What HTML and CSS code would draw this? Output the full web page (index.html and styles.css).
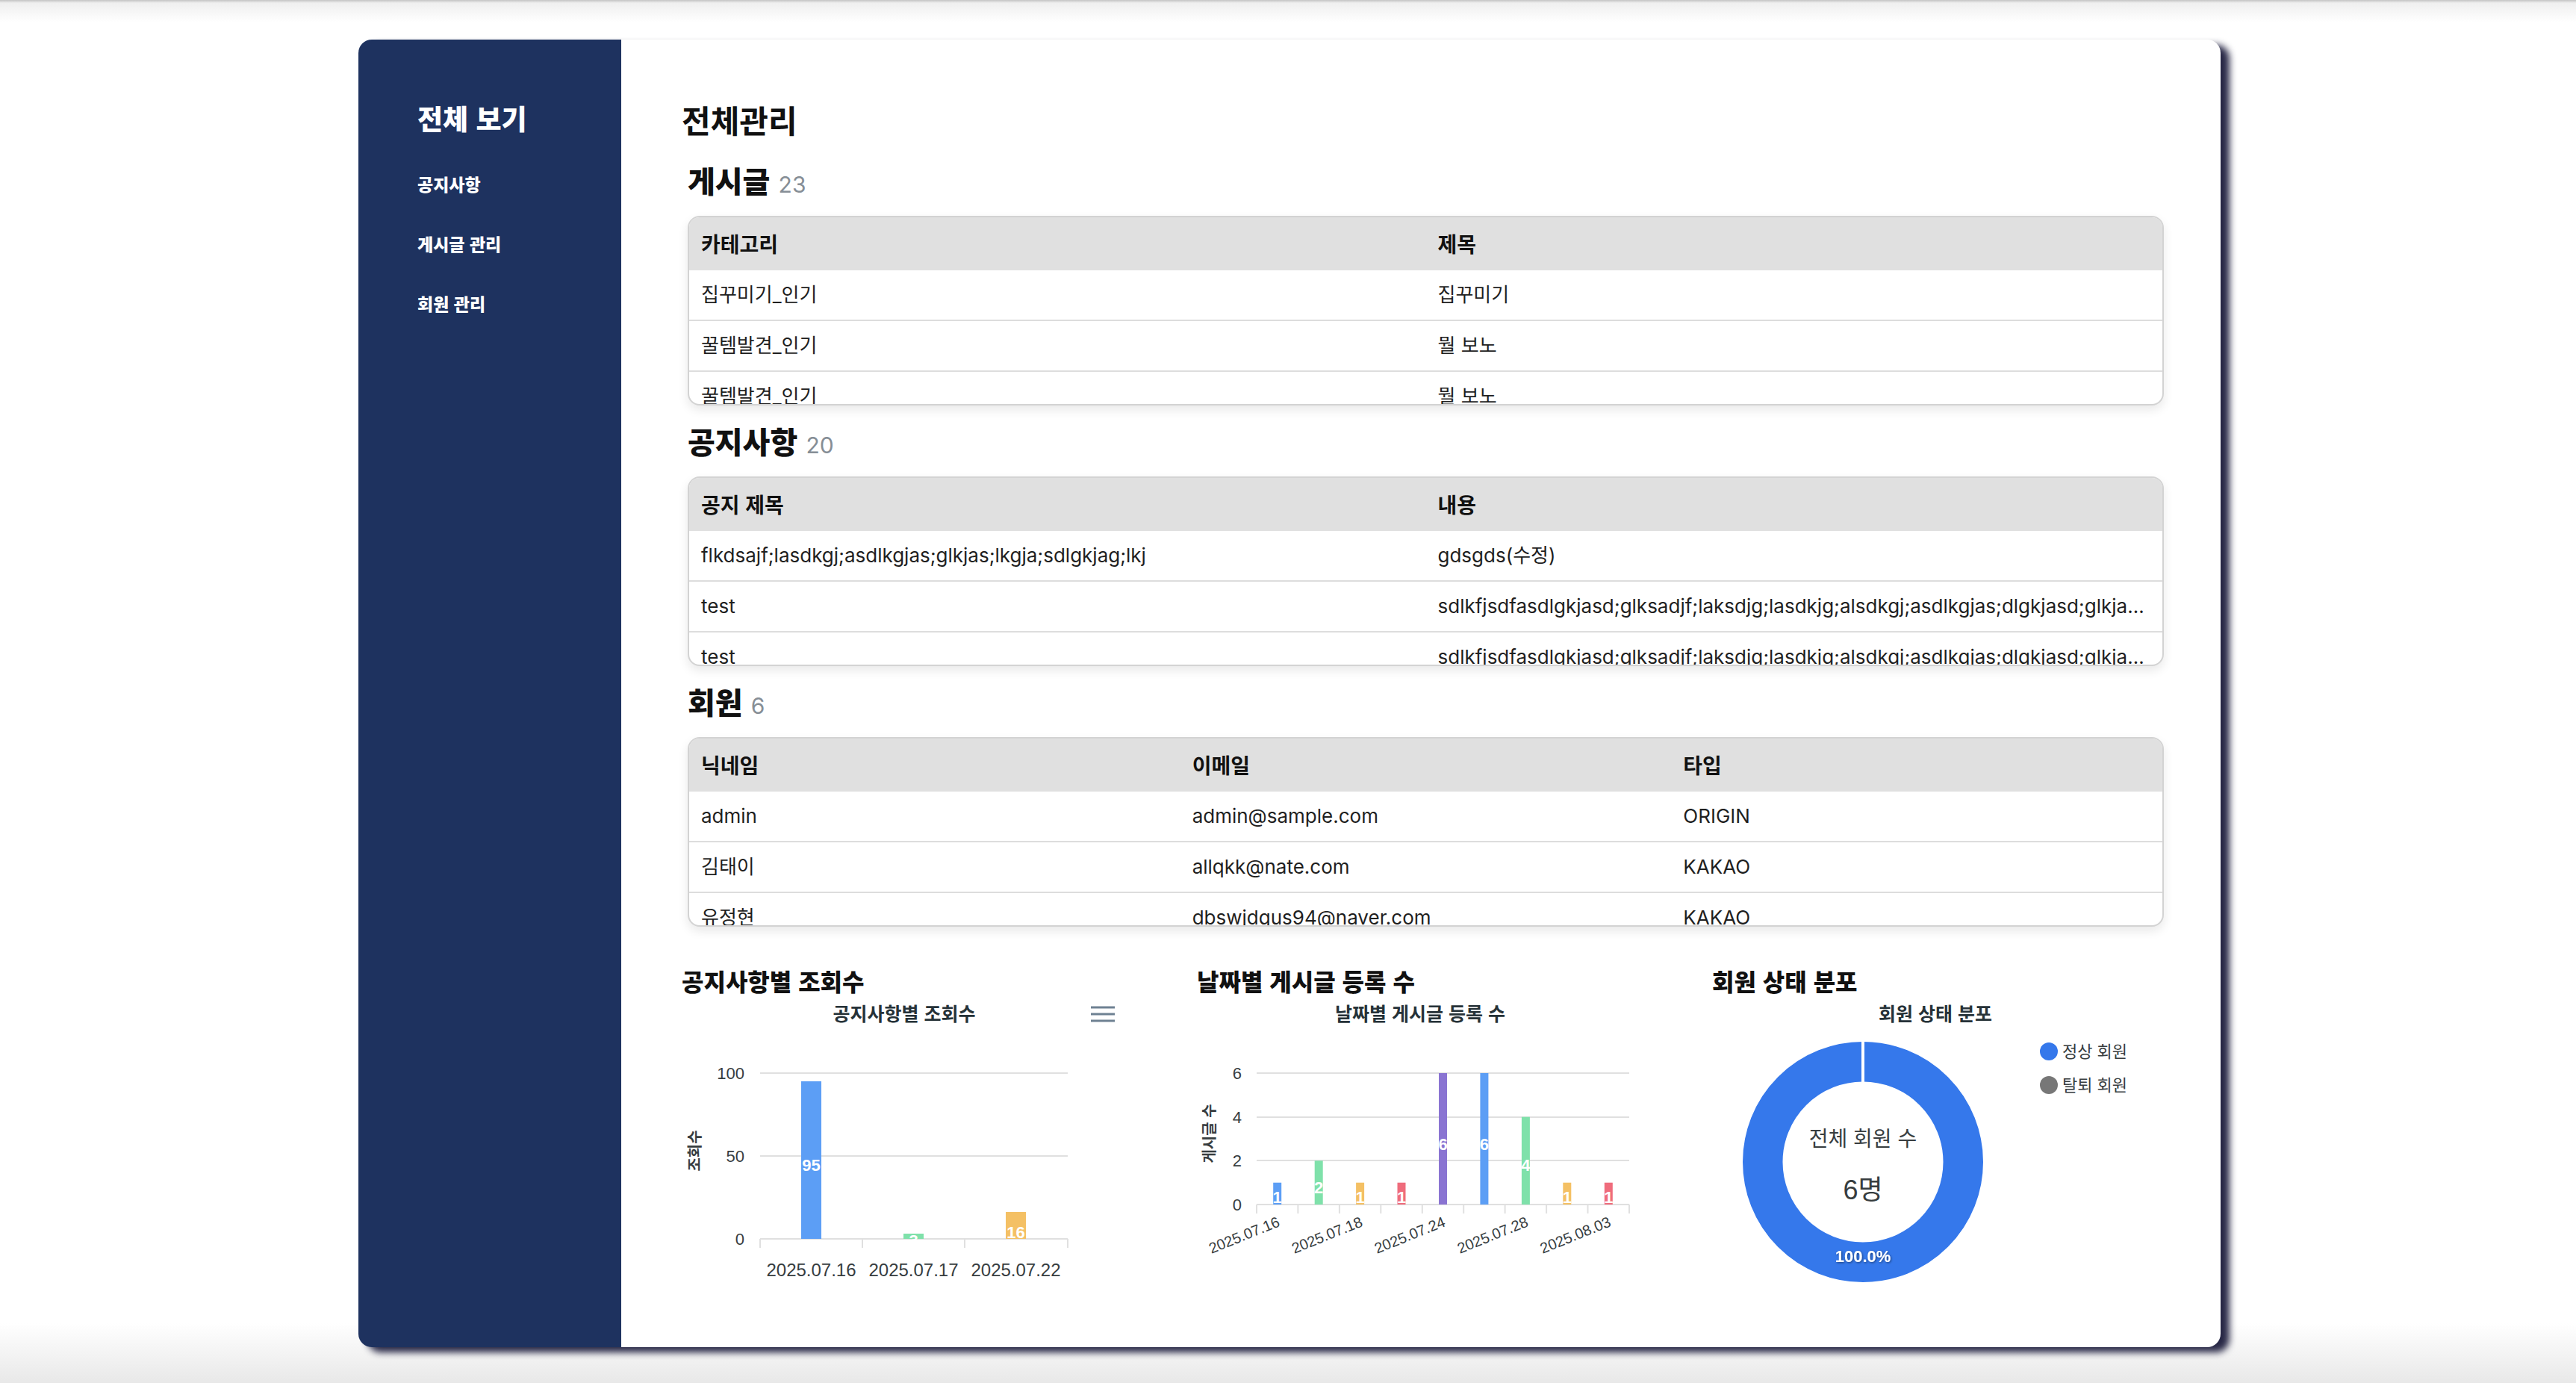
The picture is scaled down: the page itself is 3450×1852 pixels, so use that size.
FILE: index.html
```html
<!DOCTYPE html>
<html lang="ko">
<head>
<meta charset="utf-8">
<title>전체관리</title>
<link rel="stylesheet" href="styles.css">
</head>
<body>
<div class="app">
  <aside class="sidebar">
    <div class="side-title">전체 보기</div>
    <nav class="side-nav">
      <a class="side-link">공지사항</a>
      <a class="side-link">게시글 관리</a>
      <a class="side-link">회원 관리</a>
    </nav>
  </aside>
  <main class="main">
    <h1 class="page-title">전체관리</h1>

    <section class="section">
      <h2 class="section-title">게시글 <span class="count">23</span></h2>
      <div class="table-box">
        <table class="data-table">
          <thead><tr><th>카테고리</th><th>제목</th></tr></thead>
          <tbody>
            <tr><td>집꾸미기_인기</td><td>집꾸미기</td></tr>
            <tr><td>꿀템발견_인기</td><td>뭘 보노</td></tr>
            <tr><td>꿀템발견_인기</td><td>뭘 보노</td></tr>
          </tbody>
        </table>
      </div>
    </section>

    <section class="section">
      <h2 class="section-title">공지사항 <span class="count">20</span></h2>
      <div class="table-box">
        <table class="data-table">
          <thead><tr><th>공지 제목</th><th>내용</th></tr></thead>
          <tbody>
            <tr><td>flkdsajf;lasdkgj;asdlkgjas;glkjas;lkgja;sdlgkjag;lkj</td><td>gdsgds(수정)</td></tr>
            <tr><td>test</td><td>sdlkfjsdfasdlgkjasd;glksadjf;laksdjg;lasdkjg;alsdkgj;asdlkgjas;dlgkjasd;glkjasd;lgkjasdlgkjasdlkgj</td></tr>
            <tr><td>test</td><td>sdlkfjsdfasdlgkjasd;glksadjf;laksdjg;lasdkjg;alsdkgj;asdlkgjas;dlgkjasd;glkjasd;lgkjasdlgkjasdlkgj</td></tr>
          </tbody>
        </table>
      </div>
    </section>

    <section class="section">
      <h2 class="section-title">회원 <span class="count">6</span></h2>
      <div class="table-box">
        <table class="data-table">
          <thead><tr><th>닉네임</th><th>이메일</th><th>타입</th></tr></thead>
          <tbody>
            <tr><td>admin</td><td>admin@sample.com</td><td>ORIGIN</td></tr>
            <tr><td>김태이</td><td>allqkk@nate.com</td><td>KAKAO</td></tr>
            <tr><td>유정현</td><td>dbswjdgus94@naver.com</td><td>KAKAO</td></tr>
          </tbody>
        </table>
      </div>
    </section>

    <div class="charts">
      <div class="chart">
        <h3 class="chart-heading">공지사항별 조회수</h3>
        <svg class="chart-svg" width="600" height="400" viewBox="0 0 600 400">
          <text class="c-title" x="298" y="25" text-anchor="middle">공지사항별 조회수</text>
          <g class="menu-icon">
            <line x1="548" y1="16" x2="580" y2="16"/>
            <line x1="548" y1="25" x2="580" y2="25"/>
            <line x1="548" y1="34" x2="580" y2="34"/>
          </g>
          <g class="grid-line">
            <line x1="105" y1="104" x2="517" y2="104"/>
            <line x1="105" y1="215" x2="517" y2="215"/>
            <line x1="105" y1="326" x2="517" y2="326"/>
            <line x1="105" y1="326" x2="105" y2="338"/>
            <line x1="242" y1="326" x2="242" y2="338"/>
            <line x1="379" y1="326" x2="379" y2="338"/>
            <line x1="517" y1="326" x2="517" y2="338"/>
          </g>
          <text class="c-tick" x="84" y="104" text-anchor="end">100</text>
          <text class="c-tick" x="84" y="215" text-anchor="end">50</text>
          <text class="c-tick" x="84" y="326" text-anchor="end">0</text>
          <rect x="160" y="115" width="27" height="211" fill="#5c9ef5"/>
          <rect x="297" y="319" width="27" height="7" fill="#7fe1aa"/>
          <rect x="434" y="290" width="27" height="36" fill="#f4c064"/>
          <text class="c-data" x="173.5" y="227" text-anchor="middle">95</text>
          <text class="c-data" x="310.5" y="328" text-anchor="middle">3</text>
          <text class="c-data" x="447.5" y="317" text-anchor="middle">16</text>
          <text class="c-xlabel" x="173.5" y="367" text-anchor="middle">2025.07.16</text>
          <text class="c-xlabel" x="310.5" y="367" text-anchor="middle">2025.07.17</text>
          <text class="c-xlabel" x="447.5" y="367" text-anchor="middle">2025.07.22</text>
          <text class="c-axis-title" x="18" y="208" text-anchor="middle" transform="rotate(-90 18 208)">조회수</text>
        </svg>
      </div>

      <div class="chart">
        <h3 class="chart-heading">날짜별 게시글 등록 수</h3>
        <svg class="chart-svg" width="600" height="400" viewBox="0 0 600 400">
          <text class="c-title" x="299" y="25" text-anchor="middle">날짜별 게시글 등록 수</text>
          <g class="grid-line">
            <line x1="80" y1="104" x2="579" y2="104"/>
            <line x1="80" y1="163" x2="579" y2="163"/>
            <line x1="80" y1="221" x2="579" y2="221"/>
            <line x1="80" y1="280" x2="579" y2="280"/>
            <line x1="80" y1="280" x2="80" y2="292"/>
            <line x1="135.4" y1="280" x2="135.4" y2="292"/>
            <line x1="190.9" y1="280" x2="190.9" y2="292"/>
            <line x1="246.3" y1="280" x2="246.3" y2="292"/>
            <line x1="301.8" y1="280" x2="301.8" y2="292"/>
            <line x1="357.2" y1="280" x2="357.2" y2="292"/>
            <line x1="412.6" y1="280" x2="412.6" y2="292"/>
            <line x1="468.1" y1="280" x2="468.1" y2="292"/>
            <line x1="523.5" y1="280" x2="523.5" y2="292"/>
            <line x1="579" y1="280" x2="579" y2="292"/>
          </g>
          <text class="c-tick" x="60" y="104" text-anchor="end">6</text>
          <text class="c-tick" x="60" y="163" text-anchor="end">4</text>
          <text class="c-tick" x="60" y="221" text-anchor="end">2</text>
          <text class="c-tick" x="60" y="280" text-anchor="end">0</text>
          <rect x="102.2" y="250.7" width="11" height="29.3" fill="#5c9ef5"/>
          <rect x="157.7" y="221.3" width="11" height="58.7" fill="#7fe1aa"/>
          <rect x="213.1" y="250.7" width="11" height="29.3" fill="#f4c064"/>
          <rect x="268.5" y="250.7" width="11" height="29.3" fill="#ef6c7c"/>
          <rect x="324" y="104" width="11" height="176" fill="#8a74d2"/>
          <rect x="379.4" y="104" width="11" height="176" fill="#5c9ef5"/>
          <rect x="434.9" y="162.7" width="11" height="117.3" fill="#7fe1aa"/>
          <rect x="490.3" y="250.7" width="11" height="29.3" fill="#f4c064"/>
          <rect x="545.8" y="250.7" width="11" height="29.3" fill="#ef6c7c"/>
          <text class="c-data" x="107.7" y="270" text-anchor="middle">1</text>
          <text class="c-data" x="163.2" y="257" text-anchor="middle">2</text>
          <text class="c-data" x="218.6" y="270" text-anchor="middle">1</text>
          <text class="c-data" x="274" y="270" text-anchor="middle">1</text>
          <text class="c-data" x="329.5" y="199" text-anchor="middle">6</text>
          <text class="c-data" x="384.9" y="199" text-anchor="middle">6</text>
          <text class="c-data" x="440.4" y="227" text-anchor="middle">4</text>
          <text class="c-data" x="495.8" y="270" text-anchor="middle">1</text>
          <text class="c-data" x="551.3" y="270" text-anchor="middle">1</text>
          <text class="c-xlabel-sm" x="109.7" y="302" text-anchor="end" transform="rotate(-22 109.7 302)">2025.07.16</text>
          <text class="c-xlabel-sm" x="220.6" y="302" text-anchor="end" transform="rotate(-22 220.6 302)">2025.07.18</text>
          <text class="c-xlabel-sm" x="331.5" y="302" text-anchor="end" transform="rotate(-22 331.5 302)">2025.07.24</text>
          <text class="c-xlabel-sm" x="442.4" y="302" text-anchor="end" transform="rotate(-22 442.4 302)">2025.07.28</text>
          <text class="c-xlabel-sm" x="553.3" y="302" text-anchor="end" transform="rotate(-22 553.3 302)">2025.08.03</text>
          <text class="c-axis-title" x="17" y="185" text-anchor="middle" transform="rotate(-90 17 185)">게시글 수</text>
        </svg>
      </div>

      <div class="chart">
        <h3 class="chart-heading">회원 상태 분포</h3>
        <svg class="chart-svg" width="600" height="400" viewBox="0 0 600 400">
          <defs>
            <filter id="label-shadow" x="-20%" y="-40%" width="140%" height="180%">
              <feDropShadow dx="1" dy="1" stdDeviation="1.5" flood-color="#000" flood-opacity="0.5"/>
            </filter>
          </defs>
          <text class="c-title" x="299" y="25" text-anchor="middle">회원 상태 분포</text>
          <circle cx="202" cy="223" r="134.25" fill="none" stroke="#3578eb" stroke-width="53.5"/>
          <line x1="202" y1="60" x2="202" y2="118" stroke="#fff" stroke-width="4"/>
          <text class="c-center" x="202" y="192" text-anchor="middle">전체 회원 수</text>
          <text class="c-center-big" x="202" y="260" text-anchor="middle">6명</text>
          <text class="c-pct" x="202" y="349" text-anchor="middle" filter="url(#label-shadow)">100.0%</text>
          <circle cx="451" cy="75" r="12" fill="#3578eb"/>
          <text class="c-legend" x="469" y="75">정상 회원</text>
          <circle cx="451" cy="120" r="12" fill="#777777"/>
          <text class="c-legend" x="469" y="120">탈퇴 회원</text>
        </svg>
      </div>
    </div>
  </main>
</div>
</body>
</html>
```

FILE: styles.css
```css
* {
  box-sizing: border-box;
}

html,
body {
  margin: 0;
}

body {
  width: 3450px;
  height: 1852px;
  overflow: hidden;
  padding-top: 53px;
  background: linear-gradient(to bottom, #c4c4c4 0, #efefef 4px, #ffffff 30px, #ffffff 1772px, #e8e8e8 1852px);
  font-family: Inter, "Noto Sans CJK KR", sans-serif;
  color: #1f1f1f;
}

.app {
  width: 2494px;
  height: 1751px;
  margin-left: 480px;
  display: flex;
  background: #ffffff;
  border-radius: 18px;
  overflow: hidden;
  box-shadow: 12px 7px 10px rgba(28, 28, 60, 0.95);
}

/* Sidebar */
.sidebar {
  width: 352px;
  flex: none;
  background: #1e325f;
  color: #ffffff;
  padding: 83px 0 0 79px;
}

.side-title {
  font-family: "Noto Sans CJK KR", sans-serif;
  font-size: 37px;
  font-weight: 900;
  line-height: 44px;
  margin-bottom: 50px;
}

.side-nav {
  display: flex;
  flex-direction: column;
  gap: 48px;
}

.side-link {
  font-family: "Noto Sans CJK KR", sans-serif;
  font-size: 23px;
  font-weight: 900;
  line-height: 32px;
  color: #ffffff;
}

/* Main */
.main {
  flex: 1;
  min-width: 0;
  padding: 82px 76px 0 81px;
}

.page-title {
  margin: 0 0 32px;
  font-family: "Noto Sans CJK KR", sans-serif;
  font-size: 42px;
  line-height: 50px;
  font-weight: 700;
  color: #111111;
}

.section {
  margin-top: 23px;
  padding-left: 8px;
}

.section-title {
  margin: 0 0 24px;
  height: 48px;
  font-family: "Noto Sans CJK KR", sans-serif;
  font-size: 40px;
  line-height: 48px;
  font-weight: 900;
  color: #111111;
}

.count {
  font-family: Inter, sans-serif;
  font-size: 30px;
  line-height: 1;
  font-weight: 400;
  color: #868e96;
}

.table-box {
  height: 254px;
  overflow: hidden;
  border: 2px solid #d3d3d3;
  border-radius: 16px;
  background: #ffffff;
  box-shadow: 0 6px 14px rgba(0, 0, 0, 0.09);
}

.data-table {
  width: 100%;
  table-layout: fixed;
  border-collapse: collapse;
}

.data-table th {
  background: #e0e0e0;
  text-align: left;
  font-family: "Noto Sans CJK KR", sans-serif;
  font-size: 28px;
  font-weight: 700;
  line-height: 33px;
  padding: 19px 16px;
  color: #111111;
}

.data-table td {
  font-size: 26px;
  line-height: 32px;
  padding: 17px 16px;
  border-bottom: 2px solid #dddddd;
  white-space: nowrap;
  overflow: hidden;
  text-overflow: ellipsis;
  color: #1f1f1f;
}

/* Charts */
.charts {
  margin-top: 52px;
  display: grid;
  grid-template-columns: repeat(3, 600px);
  column-gap: 90px;
}

.chart-heading {
  margin: 0;
  font-family: "Noto Sans CJK KR", sans-serif;
  font-size: 32px;
  line-height: 40px;
  font-weight: 900;
  color: #111111;
}

.chart-svg {
  display: block;
}

.chart-svg text {
  dominant-baseline: central;
}

.c-title {
  font-family: "Liberation Sans", "Noto Sans CJK KR", sans-serif;
  font-size: 25px;
  font-weight: 700;
  fill: #263238;
}

.menu-icon line {
  stroke: #6e8192;
  stroke-width: 3;
}

.grid-line line {
  stroke: #e0e0e0;
  stroke-width: 2;
}

.c-tick {
  font-family: "Liberation Sans", sans-serif;
  font-size: 22px;
  fill: #373d3f;
}

.c-xlabel {
  font-family: "Liberation Sans", sans-serif;
  font-size: 24px;
  fill: #373d3f;
}

.c-xlabel-sm {
  font-family: "Liberation Sans", sans-serif;
  font-size: 20px;
  fill: #373d3f;
}

.c-axis-title {
  font-family: "Liberation Sans", "Noto Sans CJK KR", sans-serif;
  font-size: 20px;
  font-weight: 700;
  fill: #373d3f;
}

.c-data {
  font-family: "Liberation Sans", sans-serif;
  font-size: 22px;
  font-weight: 700;
  fill: #ffffff;
}

.c-center {
  font-family: "Liberation Sans", "Noto Sans CJK KR", sans-serif;
  font-size: 28px;
  fill: #373d3f;
}

.c-center-big {
  font-family: "Liberation Sans", "Noto Sans CJK KR", sans-serif;
  font-size: 36px;
  fill: #373d3f;
}

.c-pct {
  font-family: "Liberation Sans", sans-serif;
  font-size: 22px;
  font-weight: 700;
  fill: #ffffff;
}

.c-legend {
  font-family: "Liberation Sans", "Noto Sans CJK KR", sans-serif;
  font-size: 22px;
  fill: #373d3f;
}
```
